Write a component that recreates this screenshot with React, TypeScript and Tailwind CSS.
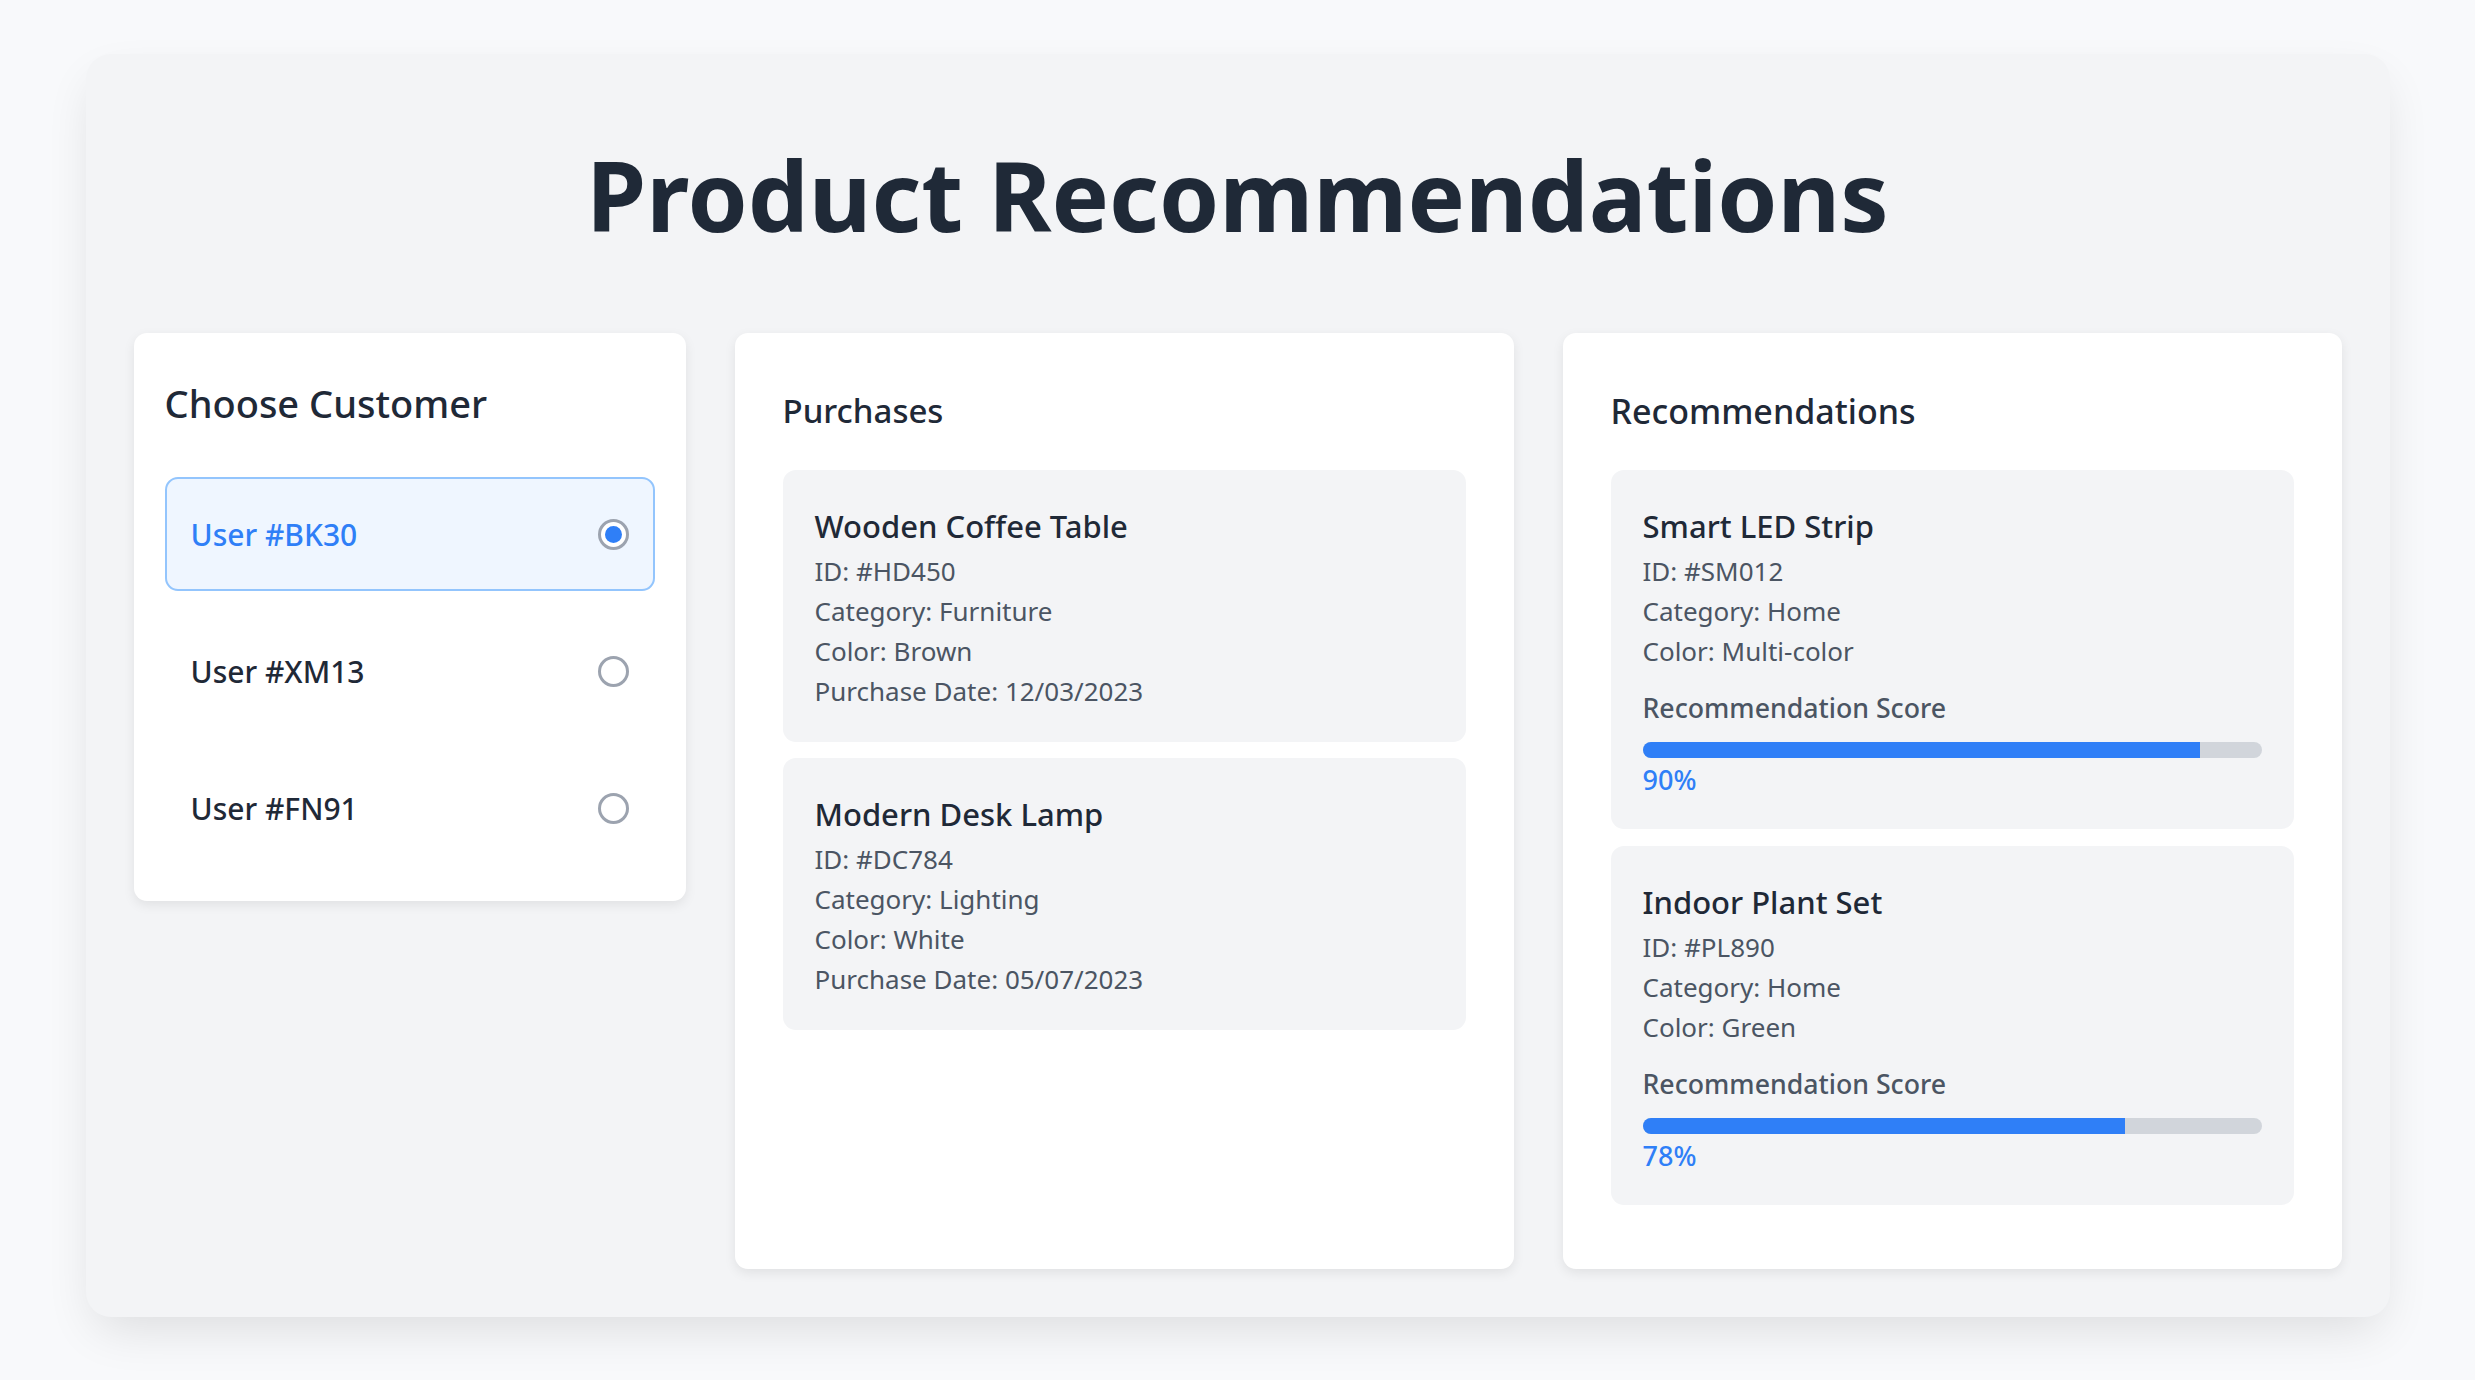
import React, { useState } from "react";

const customers = ["User #BK30", "User #XM13", "User #FN91"];

const purchases = [
  {
    name: "Wooden Coffee Table",
    id: "#HD450",
    category: "Furniture",
    color: "Brown",
    date: "12/03/2023",
  },
  {
    name: "Modern Desk Lamp",
    id: "#DC784",
    category: "Lighting",
    color: "White",
    date: "05/07/2023",
  },
];

const recommendations = [
  { name: "Smart LED Strip", id: "#SM012", category: "Home", color: "Multi-color", score: 90 },
  { name: "Indoor Plant Set", id: "#PL890", category: "Home", color: "Green", score: 78 },
];

const Radio = ({ checked }: { checked: boolean }) => (
  <div className="w-[31px] h-[31px] rounded-full border-[3px] border-[#9ca3af] bg-white flex items-center justify-center shrink-0">
    {checked && <div className="w-[17px] h-[17px] rounded-full bg-[#2f7ff7]" />}
  </div>
);

const App = () => {
  const [selected, setSelected] = useState(0);

  return (
    <div
      className="min-h-screen bg-[#f8f9fb] pt-[54px] pb-[62px]"
      style={{ fontFamily: "'Noto Sans', sans-serif" }}
    >
      <div className="mx-auto w-[2304px] bg-[#f3f4f6] rounded-[25px] shadow-[0_20px_50px_-10px_rgba(0,0,0,0.12)] p-[48px]">
        {/* Title */}
        <h1 className="mt-[45px] text-center text-[96.5px] leading-[96px] font-bold text-[#1f2937]">
          Product Recommendations
        </h1>

        <div className="mt-[90px] flex items-stretch gap-[49px]">
          {/* ── Customer picker ── */}
          <div className="w-[552px] shrink-0 self-start bg-white rounded-[13px] shadow-[0_4px_12px_rgba(0,0,0,0.08)] pt-[46px] pb-[36px] px-[31px]">
            <h2 className="text-[38px] leading-[48px] font-medium text-[#1f2937] mb-[50px]">
              Choose Customer
            </h2>
            <div className="flex flex-col gap-[23px]">
              {customers.map((c, i) => {
                const active = i === selected;
                return (
                  <div
                    key={c}
                    onClick={() => setSelected(i)}
                    className={`h-[114px] flex items-center justify-between pl-[24px] pr-[24px] rounded-[13px] border-2 cursor-pointer ${
                      active ? "bg-[#eff6ff] border-[#93c5fd]" : "bg-white border-transparent"
                    }`}
                  >
                    <span
                      className={`text-[30px] font-medium ${
                        active ? "text-[#2f7ff7]" : "text-[#1f2937]"
                      }`}
                    >
                      {c}
                    </span>
                    <Radio checked={active} />
                  </div>
                );
              })}
            </div>
          </div>

          {/* ── Purchases ── */}
          <div className="flex-1 bg-white rounded-[13px] shadow-[0_4px_12px_rgba(0,0,0,0.08)] pt-[48px] px-[48px] pb-[64px]">
            <h2 className="text-[33px] leading-[60px] font-medium text-[#1f2937] mb-[29px]">
              Purchases
            </h2>
            <div className="flex flex-col gap-[16px]">
              {purchases.map((p) => (
                <div key={p.id} className="bg-[#f3f4f6] rounded-[13px] pt-[36px] px-[32px] pb-[31px]">
                  <h3 className="text-[31px] leading-[40px] font-medium text-[#1f2937] mb-[5px]">
                    {p.name}
                  </h3>
                  <div className="text-[26px] leading-[40px] text-[#4b5563]">
                    <p>ID: {p.id}</p>
                    <p>Category: {p.category}</p>
                    <p>Color: {p.color}</p>
                    <p>Purchase Date: {p.date}</p>
                  </div>
                </div>
              ))}
            </div>
          </div>

          {/* ── Recommendations ── */}
          <div className="flex-1 bg-white rounded-[13px] shadow-[0_4px_12px_rgba(0,0,0,0.08)] pt-[48px] px-[48px] pb-[64px]">
            <h2 className="text-[34px] leading-[60px] font-medium text-[#1f2937] mb-[29px]">
              Recommendations
            </h2>
            <div className="flex flex-col gap-[17px]">
              {recommendations.map((r) => (
                <div key={r.id} className="bg-[#f3f4f6] rounded-[13px] pt-[36px] px-[32px] pb-[32px]">
                  <h3 className="text-[31px] leading-[40px] font-medium text-[#1f2937] mb-[5px]">
                    {r.name}
                  </h3>
                  <div className="text-[26px] leading-[40px] text-[#4b5563]">
                    <p>ID: {r.id}</p>
                    <p>Category: {r.category}</p>
                    <p>Color: {r.color}</p>
                  </div>
                  <p className="mt-[17px] text-[26.7px] leading-[40px] font-medium text-[#4b5563]">
                    Recommendation Score
                  </p>
                  <div className="mt-[14px] h-[16px] rounded-full bg-[#d1d5db] overflow-hidden">
                    <div className="h-full bg-[#2f7ff7]" style={{ width: `${r.score}%` }} />
                  </div>
                  <p className="mt-[5px] text-[27px] leading-[34px] font-medium text-[#2f7ff7]">
                    {r.score}%
                  </p>
                </div>
              ))}
            </div>
          </div>
        </div>
      </div>
    </div>
  );
};

export default App;
